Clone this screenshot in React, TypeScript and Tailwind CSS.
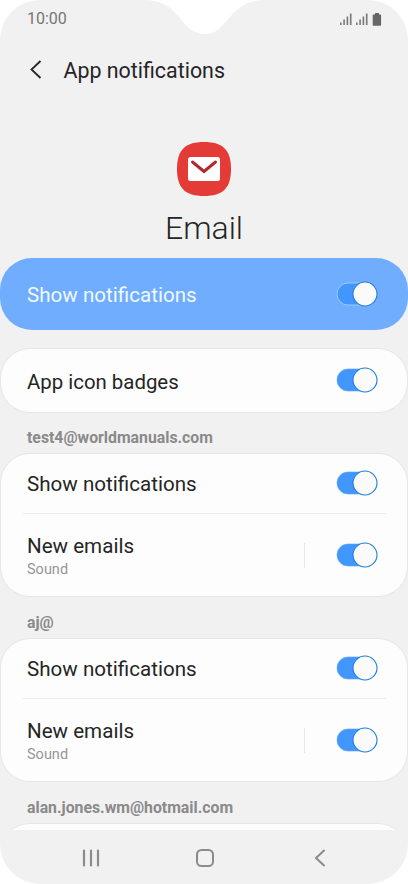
import { ReactNode } from 'react'
import clsx from 'clsx'

const ACCOUNTS = ['test4@worldmanuals.com', 'aj@']

function Toggle({ onBlue = false, className }: { onBlue?: boolean; className?: string }) {
  return (
    <svg width="42" height="26" viewBox="0 0 42 26" className={clsx('shrink-0', className)} fill="none">
      <rect
        x="1" y="2" width="38" height="22" rx="11"
        fill="#4297ff"
        stroke={onBlue ? '#9bc8ff' : '#5aa6fb'}
        strokeWidth={onBlue ? 1 : 0.6}
      />
      <circle cx="29" cy="13" r="12" fill="#fafafa" stroke="#2380d6" strokeWidth="1.1" />
    </svg>
  )
}

function Card({ className, children }: { className?: string; children?: ReactNode }) {
  return (
    <div className={clsx('shrink-0 rounded-[30px] border border-[#e6e6e6] bg-[#fdfdfd]', className)}>
      {children}
    </div>
  )
}

function SectionLabel({ children }: { children: ReactNode }) {
  return (
    <p className="flex h-[41px] shrink-0 items-center pt-2.5 pl-[27px] text-[15.8px] leading-[18px] font-bold text-[#8a8a8a]">
      {children}
    </p>
  )
}

function AccountCard() {
  return (
    <Card className="h-[144px]">
      <div className="flex h-[59px] items-center justify-between pr-[29px] pl-[26px]">
        <span className="pt-0.5">Show notifications</span>
        <Toggle className="mb-0.5" />
      </div>
      <div className="mr-[21px] ml-[22px] h-px bg-[#ededed]" />
      <div className="flex h-[82px] items-center pr-[29px] pl-[26px]">
        <div className="flex-1 pt-1.5">
          <p className="leading-[23px]">New emails</p>
          <p className="text-[14.5px] leading-[23px] text-[#969696]">Sound</p>
        </div>
        <div className="mr-[31px] h-[25px] w-px bg-[#e8e8e8]" />
        <Toggle />
      </div>
    </Card>
  )
}

function Signal() {
  return (
    <svg width="13" height="12" viewBox="0 0 13 12" fill="#777">
      <rect x="0" y="9.5" width="1.6" height="2.5" />
      <rect x="3.3" y="6.5" width="1.6" height="5.5" />
      <rect x="6.6" y="3.5" width="1.6" height="8.5" />
      <rect x="9.9" y="0.5" width="1.6" height="11.5" />
    </svg>
  )
}

export default function App() {
  return (
    <div className="h-[884px] w-[408px] overflow-hidden bg-white font-[Roboto,sans-serif] text-[20.6px] text-[#252525]">
      <div className="relative flex h-full flex-col overflow-hidden rounded-[40px] bg-[#f1f1f1]">
        {/* Camera notch */}
        <svg className="absolute top-0 left-[144px]" width="120" height="35" viewBox="0 0 120 35">
          <path d="M0 0C18 0 27 7 35 17C42 26 48 34 61 34C73 34 78 26 85 18C93 8 104 0 120 0Z" fill="#fff" />
        </svg>

        {/* Status bar */}
        <div className="flex h-[38px] shrink-0 items-center justify-between pr-[26px] pl-[27px]">
          <span className="text-[16px] leading-5 text-[#757575]">10:00</span>
          <div className="flex items-center gap-[3px]">
            <Signal />
            <Signal />
            <svg width="10" height="13" viewBox="0 0 10 13" fill="#666">
              <path d="M3 0h4v1.5h1.3a.8.8 0 0 1 .8.8V12a.8.8 0 0 1-.8.8H1.5a.8.8 0 0 1-.8-.8V2.3a.8.8 0 0 1 .8-.8H3z" />
            </svg>
          </div>
        </div>

        {/* Header */}
        <div className="flex h-[64px] shrink-0 items-center pl-[29px]">
          <svg width="14" height="20" viewBox="0 0 14 20" fill="none" stroke="#252525" strokeWidth="1.8">
            <path d="M11.5 1L2.5 9.5L11.5 18" />
          </svg>
          <h1 className="pt-0.5 pl-[20.5px] text-[21.4px] leading-7">App notifications</h1>
        </div>

        <div className="flex h-[156px] shrink-0 flex-col items-center pt-[39px]">
          <svg width="56" height="56" viewBox="0 0 56 56">
            <path d="M28 1C47 1 55 9 55 28S47 55 28 55S1 47 1 28S9 1 28 1Z" fill="#e53b36" />
            <rect x="12" y="16" width="32" height="24" rx="2.5" fill="#fff" />
            <path d="M16.500 21L28 30.500L39.500 21" fill="none" stroke="#b1292f" strokeWidth="3" strokeLinecap="round" />
          </svg>
          <p className="mt-2.5 text-[32px] leading-[42px] font-light">Email</p>
        </div>

        <div className="flex h-[72px] shrink-0 items-center justify-between rounded-[32px] bg-[#71adff] pr-[30px] pl-[27px] text-[#eefaff]">
          <span className="pt-0.5">Show notifications</span>
          <Toggle onBlue />
        </div>

        <Card className="mt-[18px] flex h-[65px] items-center justify-between pr-[29px] pl-[26px]">
          <span className="pt-[3px] text-[20.4px]">App icon badges</span>
          <Toggle className="mb-0.5" />
        </Card>

        <div className="-mt-px flex flex-1 flex-col">
          {ACCOUNTS.map(email => (
            <div key={email} className="shrink-0">
              <SectionLabel>{email}</SectionLabel>
              <AccountCard />
            </div>
          ))}
          <SectionLabel>alan.jones.wm@hotmail.com</SectionLabel>
          <div className="h-[7px] shrink-0 overflow-hidden">
            <Card className="h-[144px]" />
          </div>

          {/* Navigation bar */}
          <div className="flex flex-1 items-center pt-0.5 pl-[82px]">
            <svg width="18" height="18" viewBox="0 0 18 18" stroke="#8b8b8b" strokeWidth="2.200">
              <path d="M2 1.500V16.500M9 1.500V16.500M16 1.500V16.500" strokeLinecap="round" />
            </svg>
            <svg width="20" height="20" viewBox="0 0 20 20" fill="none" stroke="#8b8b8b" strokeWidth="2" className="ml-[95px]">
              <rect x="2" y="2" width="16" height="16" rx="4.5" />
            </svg>
            <svg width="12" height="18" viewBox="0 0 12 18" fill="none" stroke="#8b8b8b" strokeWidth="2" className="ml-[99px]">
              <path d="M10 1.500L2 9L10 16.500" strokeLinecap="round" />
            </svg>
          </div>
        </div>
      </div>
    </div>
  )
}
